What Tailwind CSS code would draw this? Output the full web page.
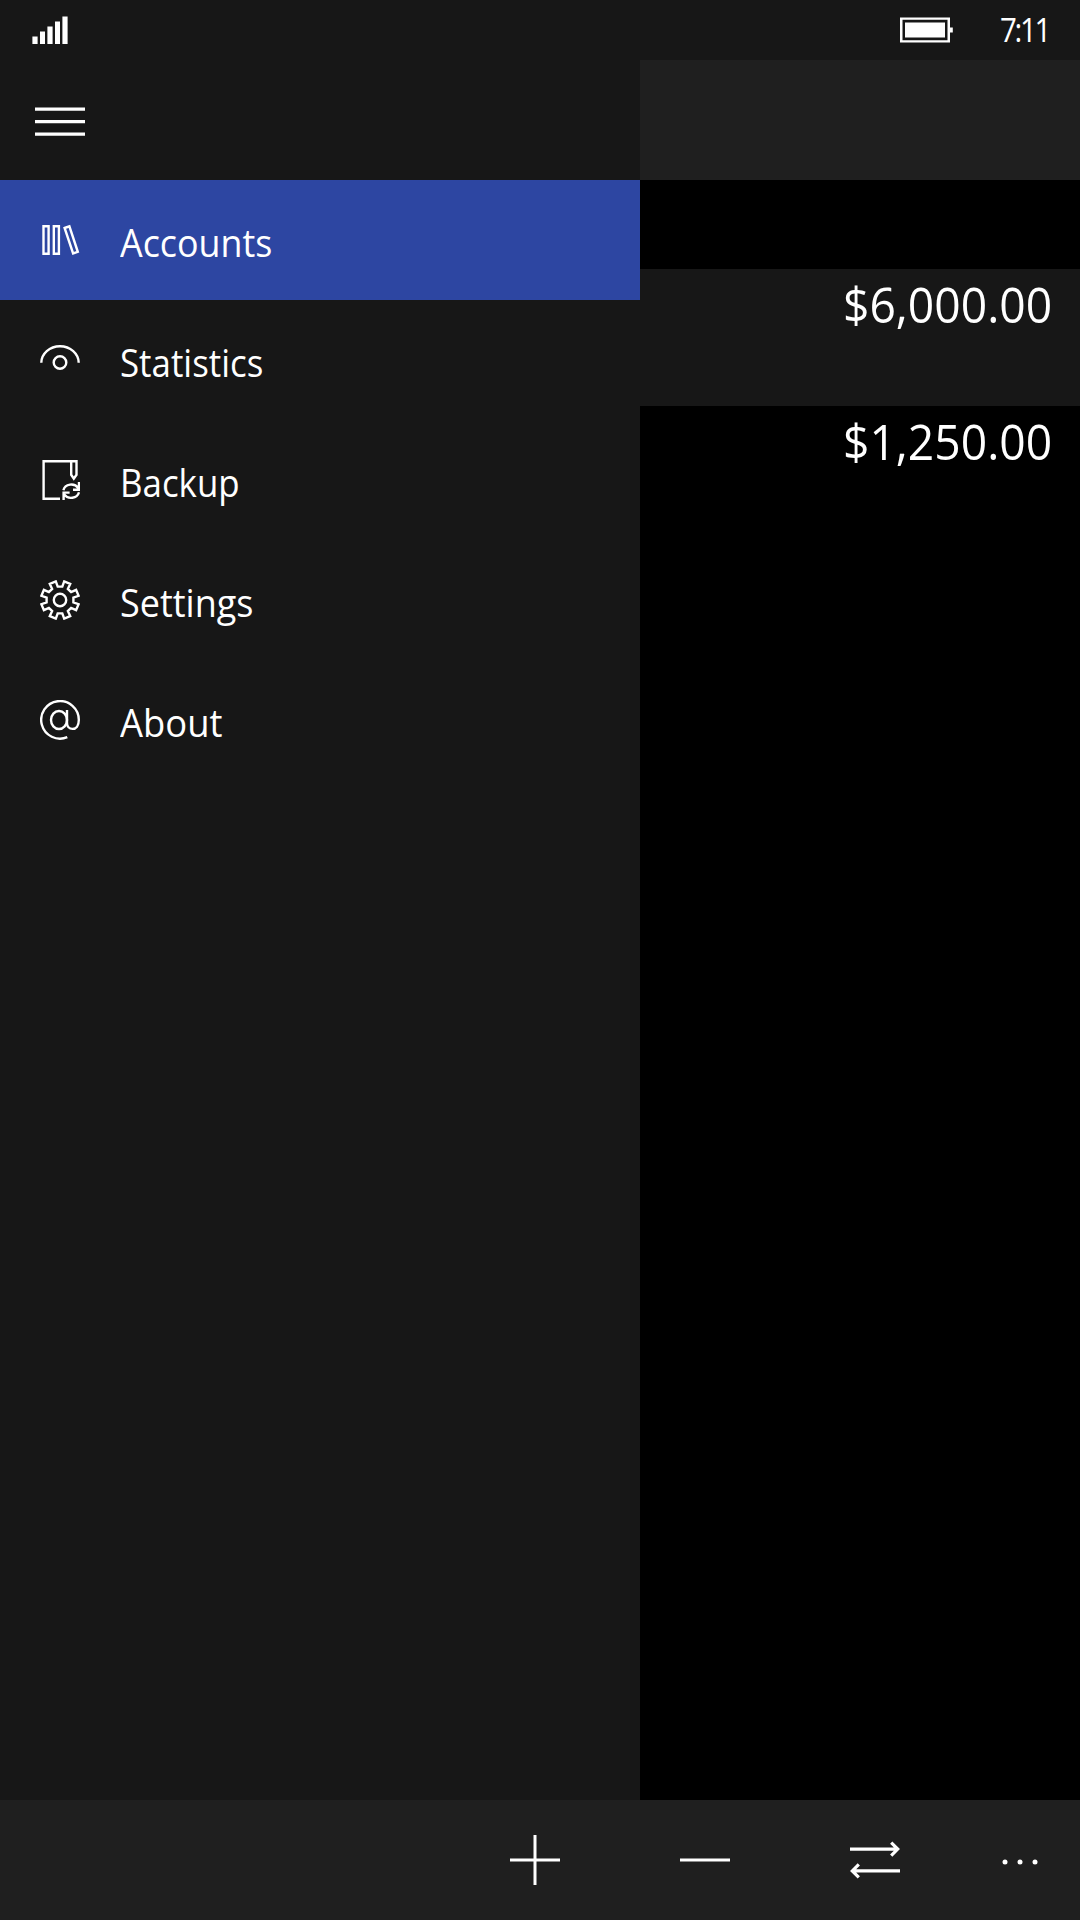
<!DOCTYPE html>
<html lang="en">
<head>
<meta charset="utf-8">
<title>Accounts</title>
<script src="https://cdn.jsdelivr.net/npm/@tailwindcss/browser@4"></script>
</head>
<body class="w-[1080px] h-[1920px] overflow-hidden bg-black text-white font-['Open_Sans','Noto_Sans',sans-serif] flex flex-col">
  <!-- status bar -->
  <header class="h-[60px] shrink-0 bg-[#171717] flex items-center justify-between pl-8 pr-[34px]">
    <svg class="w-9 h-[60px]" viewBox="32 0 36 60" fill="#fff"><path d="M32.4 36.4h5.2V44h-5.2zM40 31.4h5V44h-5zM47.4 26.4h5.2V44h-5.2zM55 21.4h5V44h-5zM62.4 16.4h5.2V44h-5.2z"/></svg>
    <div class="flex items-center">
      <svg class="w-[54px] h-[60px]" viewBox="900 0 54 60" fill="#fff"><path fill-rule="evenodd" d="M900 17.4h50v25.2h-50zM902.5 19.8v20.4h45V19.8z"/><path d="M905 22.4h40v15.2h-40zM950 27.4h2.8v5.2H950z"/></svg>
      <div class="w-[46px] ml-[46px] h-[60px] leading-[60px] text-[32px]"><span class="block whitespace-nowrap origin-left tracking-[-2.5px] scale-x-[0.92]">7:11</span></div>
    </div>
  </header>
  <div class="flex grow min-h-0">
    <nav class="w-[640px] shrink-0 bg-[#171717]">
      <div class="h-[120px] flex items-center pl-[35px]">
        <svg class="w-[50px] h-[120px]" viewBox="0 60 50 120" fill="#fff"><path d="M0 107.5h50v3.2H0zM0 120h50v3.3H0zM0 132.6h50v3.2H0z"/></svg>
      </div>
      <ul class="text-[37.5px] leading-[120px]">
        <li class="h-[120px] flex items-center pl-10 gap-10 bg-[#2d46a2]">
          <svg class="size-10" viewBox="0 0 40 40" fill="none" stroke="#fff" stroke-width="2.4"><path d="M3.5 6.2h5.1v27.6H3.5zM13.8 6.2h5.1v27.6h-5.1zM24.6 8 29.4 6.3 37.8 31.8 33.1 33.4z"/></svg>
          <span class="block pt-[6px] origin-left scale-x-[0.955]">Accounts</span>
        </li>
        <li class="h-[120px] flex items-center pl-10 gap-10">
          <svg class="size-10" viewBox="0 0 40 40" fill="none" stroke="#fff" stroke-width="2.4"><path d="M1.3 22.8a18.7 16.6 0 0 1 37.4 0"/><circle cx="20" cy="22.5" r="6.3"/></svg>
          <span class="block pt-[6px] origin-left scale-x-[0.93]">Statistics</span>
        </li>
        <li class="h-[120px] flex items-center pl-10 gap-10">
          <svg class="size-10" viewBox="0 0 40 40" fill="none" stroke="#fff" stroke-width="2.4"><path d="M20 38.8H3.6V1.2h32.9v13.6l-2.7 3.8-2.6-3.8V1.2M23.4 30.2a8.1 7.2 0 0 1 14.8-2.2M39 22v7.8h-6M39 32.2a8.1 7.2 0 0 1-14.8 2.2M23.6 40v-7.4h6"/></svg>
          <span class="block pt-[6px] origin-left scale-x-[0.93]">Backup</span>
        </li>
        <li class="h-[120px] flex items-center pl-10 gap-10">
          <svg class="size-10" viewBox="0 0 40 40" fill="none" stroke="#fff" stroke-width="2.4"><path d="M15.8 1.4 17.7 6.6H22.3L24.2 1.4 30.2 3.9 27.85 8.9 31.1 12.15 36.1 9.8 38.6 15.8 33.4 17.7V22.3L38.6 24.2 36.1 30.2 31.1 27.85 27.85 31.1 30.2 36.1 24.2 38.6 22.3 33.4H17.7L15.8 38.6 9.8 36.1 12.15 31.1 8.9 27.85 3.9 30.2 1.4 24.2 6.6 22.3V17.7L1.4 15.8 3.9 9.8 8.9 12.15 12.15 8.9 9.8 3.9Z"/><circle cx="20" cy="20" r="6.2"/></svg>
          <span class="block pt-[6px] origin-left scale-x-[0.96]">Settings</span>
        </li>
        <li class="h-[120px] flex items-center pl-10 gap-10">
          <svg class="size-10" viewBox="0 0 40 40" fill="none" stroke="#fff" stroke-width="2.4"><path d="M27.3 37.2A18.8 18.8 0 1 1 38.8 20C38.8 26 36 28.9 32.6 28.9S27 26.5 27 23V10"/><ellipse cx="19" cy="20" rx="8" ry="9"/></svg>
          <span class="block pt-[6px] origin-left scale-x-[0.97]">About</span>
        </li>
      </ul>
    </nav>
    <main class="grow bg-black text-[50px] leading-[70px]">
      <div class="h-[120px] bg-[#1f1f1f]"></div>
      <div class="h-[89px]"></div>
      <div class="h-[137px] bg-[#171717] flex justify-end pr-7"><span class="block origin-right scale-x-[0.925]">$6,000.00</span></div>
      <div class="h-[137px] flex justify-end pr-7"><span class="block origin-right scale-x-[0.925]">$1,250.00</span></div>
    </main>
  </div>
  <!-- command bar -->
  <footer class="h-[120px] shrink-0 bg-[#1f1f1f] flex justify-end">
    <svg class="w-[170px] h-[120px]" viewBox="0 0 170 120" stroke="#fff" stroke-width="3"><path d="M60 60h50M85 35v50"/></svg>
    <svg class="w-[170px] h-[120px]" viewBox="0 0 170 120" stroke="#fff" stroke-width="3"><path d="M60 60h50"/></svg>
    <svg class="w-[170px] h-[120px]" viewBox="0 0 170 120" fill="none" stroke="#fff" stroke-width="3.2"><path d="M60 49.1h47M101.2 42.6l6.5 6.5-6.5 6.5M110 70.9H63M68.8 64.4l-6.5 6.5 6.5 6.5"/></svg>
    <svg class="w-[120px] h-[120px]" viewBox="0 0 120 120" fill="#fff"><circle cx="45" cy="62" r="2.5"/><circle cx="60" cy="62" r="2.5"/><circle cx="75" cy="62" r="2.5"/></svg>
  </footer>
</body>
</html>
